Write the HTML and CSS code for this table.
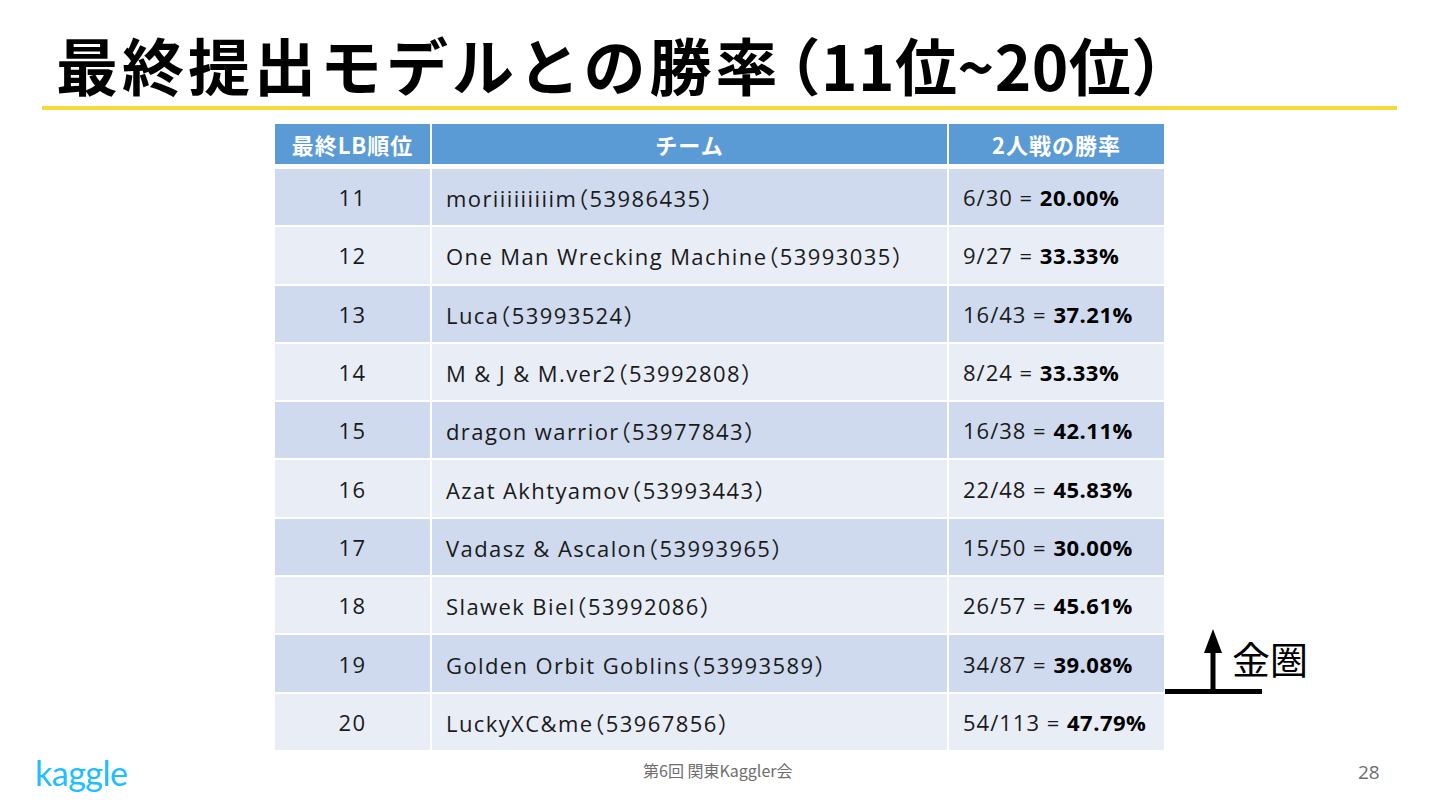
FILE: index.html
```html
<!DOCTYPE html>
<html lang="ja">
<head>
<meta charset="utf-8">
<title>最終提出モデルとの勝率</title>
<link rel="stylesheet" href="styles.css">
</head>
<body>
<div class="slide">
  <header class="title-block">
    <h1 class="title">最終提出モデルとの勝率<span class="title-range">（11位~20位）</span></h1>
    <div class="rule"></div>
  </header>
  <main class="content">
    <table class="results">
      <thead>
        <tr><th class="c-rank">最終LB順位</th><th class="c-team">チーム</th><th class="c-rate">2人戦の勝率</th></tr>
      </thead>
      <tbody>
        <tr class="odd"><td class="c-rank">11</td><td class="c-team">moriiiiiiiiim（53986435）</td><td class="c-rate">6/30 = <b>20.00%</b></td></tr>
        <tr class="even"><td class="c-rank">12</td><td class="c-team">One Man Wrecking Machine（53993035）</td><td class="c-rate">9/27 = <b>33.33%</b></td></tr>
        <tr class="odd"><td class="c-rank">13</td><td class="c-team">Luca（53993524）</td><td class="c-rate">16/43 = <b>37.21%</b></td></tr>
        <tr class="even"><td class="c-rank">14</td><td class="c-team">M &amp; J &amp; M.ver2（53992808）</td><td class="c-rate">8/24 = <b>33.33%</b></td></tr>
        <tr class="odd"><td class="c-rank">15</td><td class="c-team">dragon warrior（53977843）</td><td class="c-rate">16/38 = <b>42.11%</b></td></tr>
        <tr class="even"><td class="c-rank">16</td><td class="c-team">Azat Akhtyamov（53993443）</td><td class="c-rate">22/48 = <b>45.83%</b></td></tr>
        <tr class="odd"><td class="c-rank">17</td><td class="c-team">Vadasz &amp; Ascalon（53993965）</td><td class="c-rate">15/50 = <b>30.00%</b></td></tr>
        <tr class="even"><td class="c-rank">18</td><td class="c-team">Slawek Biel（53992086）</td><td class="c-rate">26/57 = <b>45.61%</b></td></tr>
        <tr class="odd"><td class="c-rank">19</td><td class="c-team">Golden Orbit Goblins（53993589）</td><td class="c-rate">34/87 = <b>39.08%</b></td></tr>
        <tr class="even"><td class="c-rank">20</td><td class="c-team">LuckyXC&amp;me（53967856）</td><td class="c-rate">54/113 = <b>47.79%</b></td></tr>
      </tbody>
    </table>
    <div class="gold-mark">
      <svg class="gold-arrow" width="100" height="68" viewBox="0 0 100 68" aria-hidden="true">
        <polygon points="48,0 39,24 57,24" fill="#000"/>
        <rect x="45.5" y="20" width="5" height="44" fill="#000"/>
        <rect x="0" y="60" width="97" height="5" fill="#000"/>
      </svg>
      <span class="gold-label">金圏</span>
    </div>
  </main>
  <footer class="footer">
    <span class="logo">kaggle</span>
    <span class="event">第6回 関東Kaggler会</span>
    <span class="page">28</span>
  </footer>
</div>
</body>
</html>
```
FILE: styles.css
```css
html, body {
  margin: 0;
  padding: 0;
  background: #ffffff;
}
.slide {
  width: 1440px;
  height: 810px;
  position: relative;
  overflow: hidden;
  display: flex;
  flex-direction: column;
  font-family: "Open Sans", "Noto Sans CJK JP", sans-serif;
  color: #1a1a1a;
}
.title-block {
  padding: 28px 43px 0 42px;
}
.title {
  margin: 0 0 0 14px;
  font-family: "Noto Sans CJK JP", sans-serif;
  font-weight: 700;
  font-size: 62px;
  line-height: 72px;
  letter-spacing: 4px;
  color: #000;
  white-space: nowrap;
}
.title-range {
  letter-spacing: 0.5px;
  font-feature-settings: "halt";
  margin-left: 8px;
}
.rule {
  margin-top: 6px;
  height: 4px;
  background: #f6da3a;
}
.content {
  position: relative;
  display: flex;
  justify-content: center;
  padding-top: 12px;
}
.results {
  border-collapse: separate;
  border-spacing: 2px;
  margin-left: -1px;
}
.results th {
  height: 40px;
  padding: 0;
  background: #5b9bd5;
  background-clip: padding-box;
  border-bottom: 3px solid #fff;
  color: #fff;
  font-family: "Noto Sans CJK JP", sans-serif;
  font-weight: 700;
  font-size: 22px;
  letter-spacing: 1px;
  text-align: center;
}
.results td {
  height: 56.3px;
  padding: 0;
  font-size: 22px;
  letter-spacing: 1.4px;
  font-weight: 400;
  color: #1a1a1a;
  white-space: nowrap;
  font-feature-settings: "halt";
}
.results td.c-rate {
  letter-spacing: 1px;
}
.results td b {
  font-weight: 700;
  color: #000;
  letter-spacing: 0.5px;
}
.odd td { background: #cfdaee; }
.even td { background: #e9edf6; }
.c-rank { width: 155px; text-align: center; }
.c-team { width: 515px; }
.c-rate { width: 215px; }
td.c-team, td.c-rate {
  text-align: left;
  padding-left: 14px;
  box-sizing: border-box;
}
.gold-mark {
  position: absolute;
  left: 1165px;
  top: 519px;
  width: 160px;
  height: 70px;
}
.gold-arrow {
  position: absolute;
  left: 0;
  top: 0;
}
.gold-label {
  position: absolute;
  left: 67px;
  top: 8px;
  font-family: "Noto Sans CJK JP", sans-serif;
  font-size: 38px;
  line-height: 42px;
  color: #000;
}
.footer {
  position: relative;
  flex: 1;
}
.logo {
  position: absolute;
  left: 35px;
  top: 0px;
  font-family: "Lato", sans-serif;
  font-size: 34px;
  color: #20beff;
  letter-spacing: -0.5px;
}
.event {
  position: absolute;
  left: 643px;
  top: 6px;
  font-family: "Noto Sans CJK JP", sans-serif;
  font-size: 16px;
  color: #6e6e6e;
}
.page {
  position: absolute;
  left: 1358px;
  top: 7px;
  font-family: "Open Sans", sans-serif;
  font-size: 19px;
  color: #6e6e6e;
}
```
